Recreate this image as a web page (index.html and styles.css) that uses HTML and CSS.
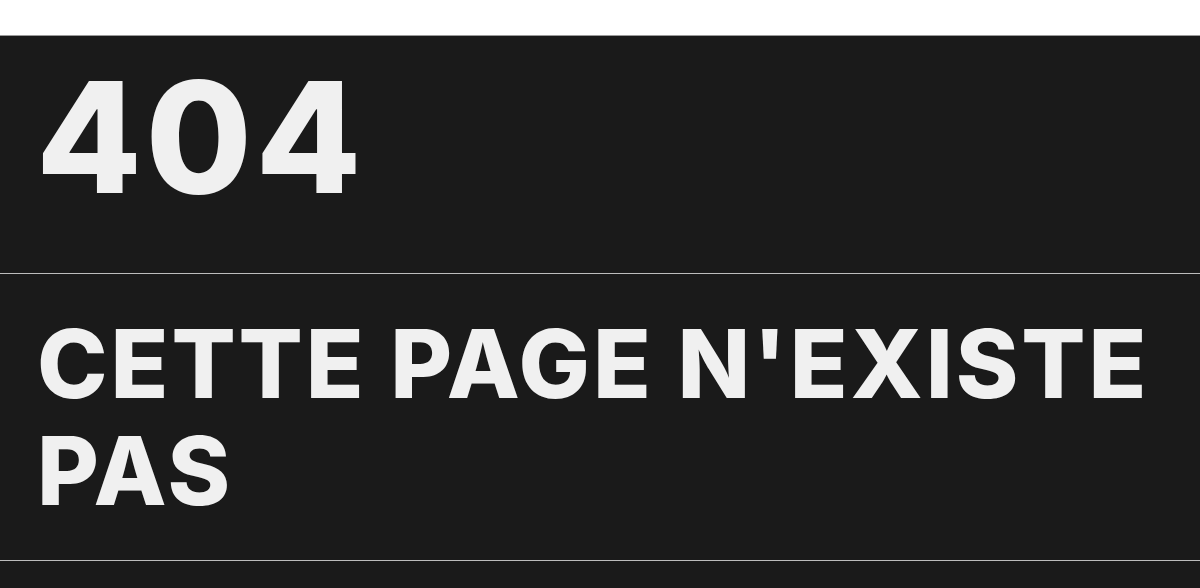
FILE: index.html
```html
<!DOCTYPE html>
<html lang="fr">
<head>
<meta charset="utf-8">
<title>404</title>
<link rel="stylesheet" href="styles.css">
</head>
<body>
<header class="top"></header>
<main class="dark">
  <section class="code-block">
    <h1 class="code">404</h1>
  </section>
  <section class="msg-block">
    <h2 class="msg">CETTE PAGE N'EXISTE PAS</h2>
  </section>
</main>
</body>
</html>
```
FILE: styles.css
```css
html, body {
  margin: 0;
  padding: 0;
}
body {
  background: #1a1a1a;
  font-family: Inter, "Open Sans", "Liberation Sans", sans-serif;
  color: #f0f0f0;
}
.top {
  height: 35px;
  background: #ffffff;
}
.dark {
  background: #1a1a1a;
  border-top: 1px solid #9a9a9a;
}
.code-block {
  padding: 24px 36px 59px;
  border-bottom: 1px solid #bdbdbd;
}
.code {
  margin: 0;
  font-size: 154px;
  line-height: 1;
  font-weight: 800;
  letter-spacing: 3.5px;
}
.msg-block {
  padding: 36px 37px 36px;
  border-bottom: 1px solid #bdbdbd;
}
.msg {
  margin: 0;
  font-size: 95px;
  line-height: 107px;
  font-weight: 800;
  letter-spacing: 2.9px;
}
```
